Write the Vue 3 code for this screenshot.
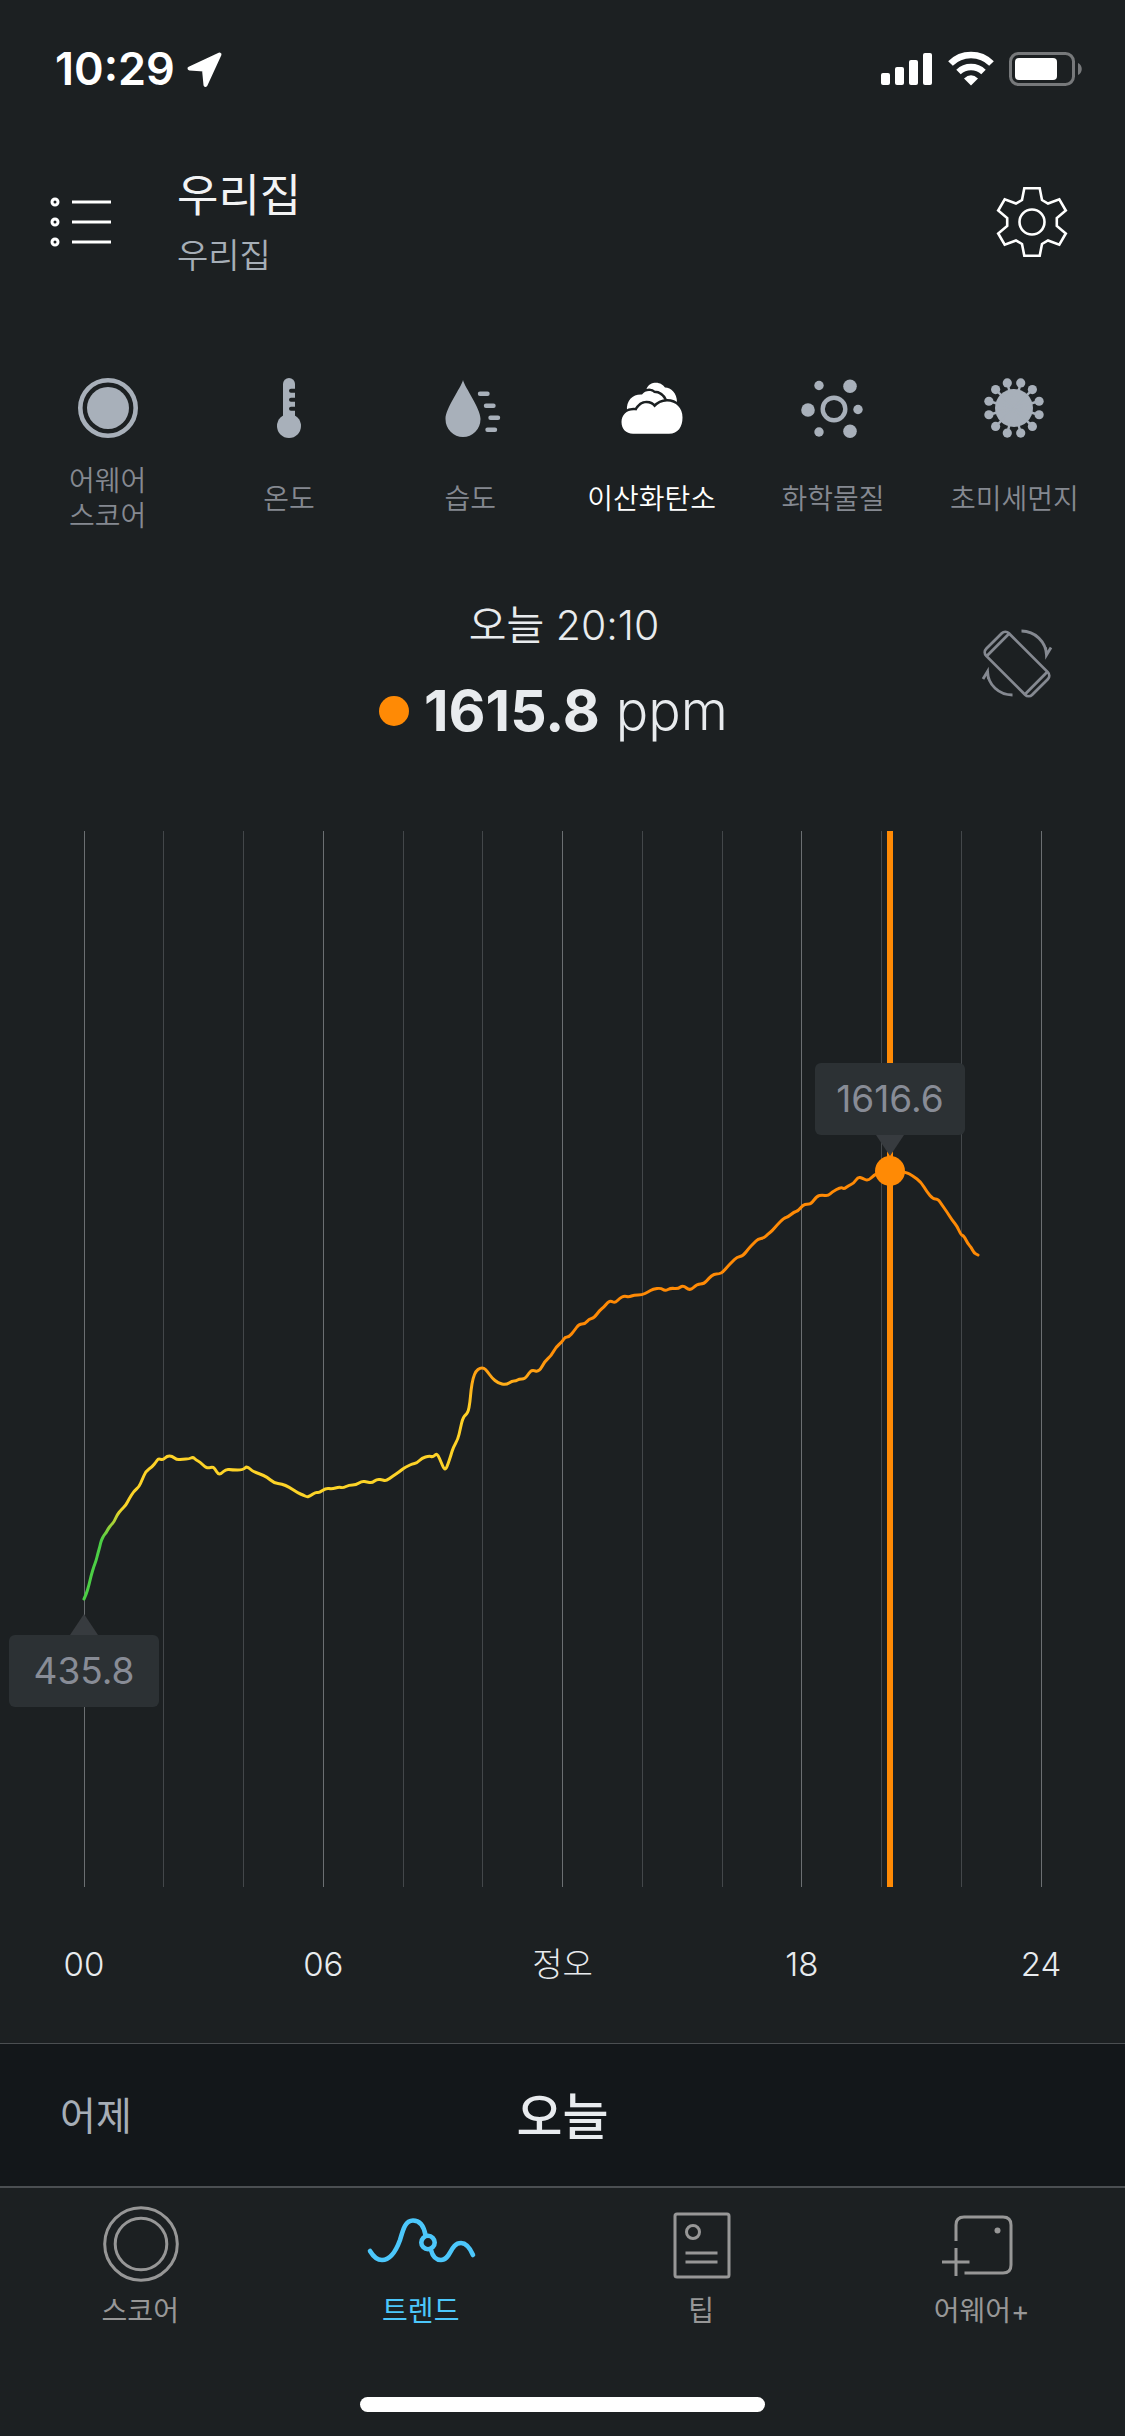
<script setup>
import { computed, ref } from "vue";

const CHART_WIDTH = 957;
const CHART_HEIGHT = 1056;

const metrics = [
  { id: "score", lines: ["어웨어", "스코어"] },
  { id: "temp", lines: ["온도"] },
  { id: "humid", lines: ["습도"] },
  { id: "co2", lines: ["이산화탄소"] },
  { id: "voc", lines: ["화학물질"] },
  { id: "dust", lines: ["초미세먼지"] },
];
const activeMetric = ref("co2");

const tabs = [
  { id: "score", label: "스코어" },
  { id: "trend", label: "트렌드" },
  { id: "tip", label: "팁" },
  { id: "plus", label: "어웨어+" },
];
const activeTab = ref("trend");

const hours = ["00", "06", "정오", "18", "24"];

// One line every two hours, a brighter one every six
const gridLines = Array.from({ length: 13 }, (_, i) => ({
  x: (i * CHART_WIDTH) / 12,
  major: i % 3 === 0,
}));

// CO2 readings in chart units
const readings = [
  [0, 768], [2, 764], [5, 754], [7, 745], [10, 735], [12, 730], [14, 722], [16, 715], [17, 710], [20, 704],
  [22, 702], [24, 698], [27, 694], [30, 691], [33, 684], [37, 679], [42, 674], [45, 668], [50, 660], [55, 656],
  [58, 649], [62, 640], [68, 636], [72, 631], [74, 628], [76, 628], [79, 629], [83, 625], [88, 625], [93, 629],
  [99, 628], [105, 628], [109, 626], [112, 629], [116, 631], [121, 636], [124, 637], [129, 636], [131, 638], [134, 643],
  [137, 643], [142, 638], [148, 639], [159, 639], [163, 635], [168, 640], [176, 643], [183, 646], [190, 652], [198, 653],
  [205, 656], [214, 662], [219, 664], [223, 666], [226, 665], [232, 661], [235, 662], [242, 657], [248, 658], [255, 656],
  [259, 657], [265, 654], [272, 654], [278, 650], [283, 651], [288, 652], [293, 648], [299, 649], [302, 650], [309, 645],
  [315, 641], [320, 637], [324, 635], [328, 633], [333, 632], [338, 627], [345, 625], [349, 626], [352, 623], [354, 624],
  [357, 631], [360, 638], [362, 638], [364, 633], [367, 624], [369, 617], [374, 608], [376, 599], [379, 586], [384, 582],
  [386, 571], [387, 559], [389, 547], [392, 540], [396, 537], [400, 537], [403, 540], [408, 547], [414, 552], [422, 554],
  [428, 550], [432, 550], [435, 548], [441, 548], [445, 542], [448, 539], [455, 541], [461, 530], [467, 525], [472, 516],
  [478, 511], [481, 506], [485, 506], [490, 500], [495, 493], [501, 493], [505, 488], [510, 487], [516, 479], [520, 476],
  [524, 471], [527, 470], [531, 472], [536, 467], [540, 465], [545, 466], [550, 464], [558, 464], [564, 461], [569, 458],
  [577, 457], [581, 460], [587, 457], [594, 458], [599, 454], [606, 460], [613, 453], [620, 453], [625, 447], [630, 443],
  [635, 443], [639, 441], [644, 435], [648, 431], [653, 426], [659, 425], [665, 417], [670, 412], [674, 408], [680, 407],
  [684, 403], [688, 400], [693, 394], [700, 387], [704, 386], [710, 381], [714, 380], [719, 374], [723, 373], [727, 373],
  [733, 365], [738, 364], [744, 365], [748, 361], [757, 356], [760, 358], [764, 355], [770, 352], [774, 346], [778, 347],
  [784, 350], [790, 344], [797, 341], [806, 340], [822, 341], [829, 345], [837, 351], [843, 361], [849, 368], [854, 368],
  [858, 374], [863, 381], [868, 389], [873, 395], [877, 404], [880, 405], [884, 413], [887, 416], [890, 422], [894, 424],
];

// Smooth the readings by running each curve through the midpoints
const linePath = computed(() => {
  let d = `M${readings[0].join(" ")}`;
  for (let i = 1; i < readings.length - 1; i++) {
    const [x, y] = readings[i];
    const [nx, ny] = readings[i + 1];
    d += `Q${x} ${y} ${(x + nx) / 2} ${(y + ny) / 2}`;
  }
  return `${d}L${readings[readings.length - 1].join(" ")}`;
});

const peak = { x: 806, y: 340, value: "1616.6" };
const low = { x: 0, y: 768, value: "435.8" };

const place = (point) => ({
  left: `${(point.x / CHART_WIDTH) * 100}%`,
  top: `${(point.y / CHART_HEIGHT) * 100}%`,
});

const spikes = Array.from({ length: 12 }, (_, i) => {
  const angle = ((i * 30 + 15) * Math.PI) / 180;
  return { x: 30 + 26 * Math.cos(angle), y: 30 + 26 * Math.sin(angle) };
});
</script>

<template>
  <div class="app">
    <!-- STATUS BAR -->
    <div class="status-bar">
      <div class="status-left">
        <span class="clock">10:29</span>
        <svg width="36" height="36" viewBox="0 0 36 36" aria-hidden="true">
          <path
            d="M32.5 2.5 2.5 16.5 17 17.5 18.5 33Z"
            fill="#fff"
            stroke="#fff"
            stroke-width="4"
            stroke-linejoin="round"
          />
        </svg>
      </div>
      <div class="status-right">
        <svg width="52" height="34" viewBox="0 0 52 34" fill="#fff" aria-hidden="true">
          <rect x="0" y="21" width="9" height="12" rx="2" />
          <rect x="14" y="15" width="9" height="18" rx="2" />
          <rect x="28" y="8" width="9" height="25" rx="2" />
          <rect x="42" y="1" width="9" height="32" rx="2" />
        </svg>
        <svg width="46" height="34" viewBox="0 0 46 34" aria-hidden="true">
          <path d="M2.5 11.5A29 29 0 0 1 43.5 11.5" fill="none" stroke="#fff" stroke-width="6.6" />
          <path d="M10.5 20A18 18 0 0 1 35.5 20" fill="none" stroke="#fff" stroke-width="6.4" />
          <path d="M16 26.500Q23 20 30 26.500L23 33.500Z" fill="#fff" />
        </svg>
        <svg width="74" height="34" viewBox="0 0 74 34" aria-hidden="true">
          <rect x="1.500" y="1.500" width="63" height="31" rx="8" fill="none" stroke="#77797b" stroke-width="3" />
          <rect x="6" y="6" width="42" height="22" rx="4" fill="#fff" />
          <path d="M69 11C74 13 74 21 69 23Z" fill="#77797b" />
        </svg>
      </div>
    </div>

    <!-- HEADER -->
    <header class="header">
      <button class="icon-btn" type="button" aria-label="메뉴">
        <svg width="64" height="52" viewBox="0 0 64 52" fill="none" stroke="#fff" stroke-width="3">
          <circle cx="7" cy="6" r="3" />
          <circle cx="7" cy="26" r="3" />
          <circle cx="7" cy="46" r="3" />
          <path d="M24 6H63M24 26H63M24 46H63" />
        </svg>
      </button>
      <div class="place">
        <h1>우리집</h1>
        <p>우리집</p>
      </div>
      <button class="icon-btn" type="button" aria-label="설정">
        <svg width="72" height="72" viewBox="-36 -36 72 72" fill="none" stroke="#fff" stroke-width="2.600">
          <path
            d="M-7.700-33.700H7.700L10-22 16-18.500 27.300-22.700 33.800-11.500 24.800-4V4L33.800 11.500 27.300 22.700 16 18.500 10 22 7.700 33.700H-7.700L-10 22-16 18.500-27.300 22.700-33.800 11.500-24.800 4V-4L-33.800-11.500-27.300-22.700-16-18.500-10-22Z"
          />
          <circle r="12.500" />
        </svg>
      </button>
    </header>

    <!-- METRIC PICKER -->
    <nav class="metrics">
      <button
        v-for="metric in metrics"
        :key="metric.id"
        type="button"
        :class="['metric', { active: metric.id === activeMetric }]"
        @click="activeMetric = metric.id"
      >
        <svg class="metric-icon" viewBox="0 0 60 60" fill="currentColor" aria-hidden="true">
          <template v-if="metric.id === 'score'">
            <circle cx="30" cy="30" r="27.700" fill="none" stroke="currentColor" stroke-width="4.600" />
            <circle cx="30" cy="30" r="21" />
          </template>
          <template v-else-if="metric.id === 'temp'">
            <rect x="24" y="0" width="12" height="44" rx="6" />
            <circle cx="30" cy="48" r="12" />
            <path class="cut" d="M32 12.700H38M32 21.700H38M32 30.700H38" />
          </template>
          <template v-else-if="metric.id === 'humid'">
            <path d="M23 2C25 10 40.500 30 40.500 41A17.500 18 0 0 1 5.500 41C5.500 30 21 10 23 2Z" />
            <path
              d="M40 15.700H47.500M46 27.700H53.500M50.500 39.700H58M47.500 51.700H55"
              stroke="currentColor"
              stroke-width="4.400"
              stroke-linecap="round"
            />
          </template>
          <template v-else-if="metric.id === 'co2'">
            <path d="M24.500 11C26 6.500 30 4.700 34 4.700C38 4.700 41.500 7 43 9.500C49 9.500 55 15 55 24L50 28 38 24Z" />
            <path
              class="cloud"
              d="M5 33C4 22 11 16 20 16.500C23 12.500 29 12 32 15C37 15 41 18 43 23L33 36 10 38Z"
            />
            <path
              class="cloud"
              d="M11 55.700H47C56 55.700 60.500 49 60.500 39.500C60.500 30 54 23.500 45 23.500C40 23.500 36 25.500 32.500 29.500C30.500 26.500 27.500 25.300 24.500 25.300C20 25.300 17 28 14.500 32.500C6 31-.5 36-.5 44C-.5 51 4 55.700 11 55.700Z"
            />
          </template>
          <template v-else-if="metric.id === 'voc'">
            <circle cx="31" cy="31" r="11.300" fill="none" stroke="currentColor" stroke-width="4.400" />
            <circle cx="16" cy="7.500" r="4.700" />
            <circle cx="47" cy="8.300" r="6.800" />
            <circle cx="5" cy="32" r="6.800" />
            <circle cx="55" cy="31.500" r="4.700" />
            <circle cx="16" cy="54" r="4.700" />
            <circle cx="47" cy="53.300" r="6.800" />
          </template>
          <template v-else>
            <circle cx="30" cy="30" r="19" />
            <g v-for="(spike, i) in spikes" :key="i">
              <line x1="30" y1="30" :x2="spike.x" :y2="spike.y" stroke="currentColor" stroke-width="2.400" />
              <circle :cx="spike.x" :cy="spike.y" r="4.600" />
            </g>
          </template>
        </svg>
        <span class="metric-label">
          <span v-for="line in metric.lines" :key="line">{{ line }}</span>
        </span>
      </button>
    </nav>

    <!-- CURRENT READING -->
    <section class="reading">
      <div class="reading-body">
        <p class="reading-time">오늘 20:10</p>
        <p class="reading-value">
          <span class="dot"></span>
          <strong>1615.8</strong>
          <span class="unit">ppm</span>
        </p>
      </div>
      <button class="icon-btn rotate-btn" type="button" aria-label="가로 보기">
        <svg width="72" height="72" viewBox="0 0 72 72" fill="none" stroke="#858991" stroke-width="2.800">
          <g transform="rotate(-45 36 36)">
            <rect x="20" y="3.500" width="32" height="65" rx="5" />
            <path d="M20 9H52M20 63H52" />
          </g>
          <path d="M40.500 3C54 3 65 14 65.500 27L70 19.500M65.500 27 64.500 19.500" />
          <path d="M31.500 67C18 67 7 57 6.500 43.500L2 51M6.500 43.500 7.500 51" />
        </svg>
      </button>
    </section>

    <!-- CHART -->
    <section class="chart">
      <div class="plot">
        <svg
          class="plot-svg"
          :viewBox="`0 0 ${CHART_WIDTH} ${CHART_HEIGHT}`"
          preserveAspectRatio="none"
          aria-hidden="true"
        >
          <defs>
            <linearGradient id="level" gradientUnits="userSpaceOnUse" x1="0" y1="500" x2="0" y2="720">
              <stop offset="0" stop-color="#ff8a05" />
              <stop offset="0.100" stop-color="#ff8f08" />
              <stop offset="0.220" stop-color="#ffa817" />
              <stop offset="0.360" stop-color="#ffd026" />
              <stop offset="0.800" stop-color="#fbd428" />
              <stop offset="0.950" stop-color="#4ccf45" />
            </linearGradient>
          </defs>
          <line
            v-for="line in gridLines"
            :key="line.x"
            :class="['grid-line', { major: line.major }]"
            :x1="line.x"
            :x2="line.x"
            y1="0"
            :y2="CHART_HEIGHT"
          />
          <line class="cursor" :x1="peak.x" :x2="peak.x" y1="0" :y2="CHART_HEIGHT" />
          <path class="curve" :d="linePath" stroke="url(#level)" />
        </svg>
        <div class="marker" :style="place(peak)"></div>
        <div class="tip above" :style="place(peak)">{{ peak.value }}</div>
        <div class="tip below" :style="place(low)">{{ low.value }}</div>
      </div>
    </section>
    <div class="hours">
      <span v-for="hour in hours" :key="hour">{{ hour }}</span>
    </div>

    <!-- DAY SWITCH -->
    <div class="days">
      <button class="day prev" type="button">어제</button>
      <button class="day today" type="button">오늘</button>
    </div>

    <!-- TAB BAR -->
    <nav class="tab-bar">
      <a
        v-for="tab in tabs"
        :key="tab.id"
        :href="`#${tab.id}`"
        :class="['tab', { active: tab.id === activeTab }]"
        @click.prevent="activeTab = tab.id"
      >
        <svg
          width="107"
          height="76"
          viewBox="0 0 107 76"
          fill="none"
          stroke="currentColor"
          stroke-width="3"
          aria-hidden="true"
        >
          <template v-if="tab.id === 'score'">
            <circle cx="54" cy="38" r="36.300" />
            <circle cx="54" cy="38" r="25.800" />
          </template>
          <g v-else-if="tab.id === 'trend'" stroke-width="4.600" stroke-linecap="round">
            <path
              d="M3 45C6 50 10 54 15 54C24 54 29 45 33 34C36 24 38 14.500 46 14.500C53 14.500 57 21 58.500 29M64 44C65.500 50 69 54 74 54C84 54 83 37 94 37C99 37 103 42 106 49"
            />
            <circle cx="61" cy="36.500" r="6.700" />
          </g>
          <template v-else-if="tab.id === 'tip'">
            <rect x="27" y="8" width="54" height="63" rx="2" />
            <circle cx="45" cy="26" r="6.500" />
            <path d="M37.500 47H69.500M37.500 56H69.500" />
          </template>
          <template v-else>
            <path d="M28 35V19Q28 11 36 11H75Q83 11 83 19V59Q83 67 75 67H36.500" />
            <path d="M28 42V70M14 56H41.500" />
            <circle cx="69.500" cy="24.500" r="3" fill="currentColor" stroke="none" />
          </template>
        </svg>
        <span>{{ tab.label }}</span>
      </a>
    </nav>
    <div class="home-indicator"></div>
  </div>
</template>

<style>
body {
  margin: 0;
  background: #1c2022;
}
</style>

<style scoped>
/* ===== BASE ===== */
.app {
  display: flex;
  flex-direction: column;
  min-height: 100vh;
  background: #1c2022;
  color: #e8ebee;
  font-family: Inter, "Noto Sans CJK KR", sans-serif;
}

h1,
p {
  margin: 0;
}

button {
  padding: 0;
  border: none;
  background: none;
  color: inherit;
  font: inherit;
  cursor: pointer;
}

svg {
  display: block;
  flex: none;
  overflow: visible;
}

/* ===== STATUS BAR ===== */
.status-bar {
  display: flex;
  justify-content: space-between;
  box-sizing: border-box;
  height: 132px;
  padding: 52px 42px 0 55px;
}

.status-left {
  display: flex;
  gap: 12px;
}

.clock {
  color: #fff;
  font-size: 45px;
  font-weight: 600;
  line-height: 34px;
}

.status-right {
  display: flex;
  gap: 15px;
}

/* ===== HEADER ===== */
.header {
  display: flex;
  align-items: center;
  height: 180px;
  padding: 0 57px 0 48px;
}

.place {
  flex: 1;
  padding: 8px 0 0 65px;
}

.place h1 {
  color: #f2f3f4;
  font-size: 45px;
  font-weight: 400;
  line-height: 60px;
}

.place p {
  color: #a6aeb7;
  font-size: 34px;
  font-weight: 350;
  line-height: 60px;
}

/* ===== METRICS ===== */
.metrics {
  display: grid;
  grid-template-columns: repeat(6, 1fr);
  padding: 66px 20px 0 17px;
}

.metric {
  display: flex;
  flex-direction: column;
  align-items: center;
  gap: 25px;
  color: #858991;
}

.metric-icon {
  width: 60px;
  height: 60px;
  color: #a8b0ba;
}

.metric-label {
  display: flex;
  flex-direction: column;
  justify-content: center;
  height: 72px;
  font-size: 28px;
  font-weight: 350;
  line-height: 35px;
  white-space: nowrap;
}

.metric.active,
.metric.active .metric-icon {
  color: #fff;
}

.cut {
  stroke: #1c2022;
  stroke-width: 4;
  stroke-linecap: round;
}

.cloud {
  stroke: #1c2022;
  stroke-width: 5;
  paint-order: stroke;
}

/* ===== READING ===== */
.reading {
  display: grid;
  grid-template-columns: 1fr auto 1fr;
  height: 152px;
  padding: 60px 72px 84px;
}

.reading-body {
  display: flex;
  flex-direction: column;
  grid-column: 2;
  align-items: center;
  gap: 20px;
}

.reading-time {
  padding-left: 3px;
  font-size: 41px;
  font-weight: 350;
  line-height: 60px;
}

.reading-value {
  display: flex;
  align-items: center;
  padding-right: 18px;
  font-size: 54px;
  line-height: 72px;
}

.reading-value strong {
  margin: 0 16px 0 15px;
  font-size: 57px;
  font-weight: 700;
}

.unit {
  font-weight: 300;
}

.dot {
  width: 30px;
  height: 30px;
  border-radius: 50%;
  background: #ff8a05;
}

.rotate-btn {
  align-self: start;
  justify-self: end;
  margin-top: 33px;
}

/* ===== CHART ===== */
.chart {
  padding: 0 84px;
}

.plot {
  position: relative;
  height: 1056px;
}

.plot-svg {
  width: 100%;
  height: 100%;
}

.grid-line {
  stroke: #43474a;
  stroke-width: 1;
  shape-rendering: crispEdges;
  vector-effect: non-scaling-stroke;
}

.grid-line.major {
  stroke: #6b6f72;
}

.cursor {
  stroke: #ff8a05;
  stroke-width: 6;
  vector-effect: non-scaling-stroke;
}

.curve {
  fill: none;
  stroke-width: 3;
  stroke-linecap: round;
  stroke-linejoin: round;
  vector-effect: non-scaling-stroke;
}

.marker {
  position: absolute;
  width: 30px;
  height: 30px;
  border-radius: 50%;
  background: #ff8a05;
  transform: translate(-50%, -50%);
}

.tip {
  position: absolute;
  width: 150px;
  height: 72px;
  border-radius: 6px;
  background: #2c3134;
  color: #888c96;
  font-size: 37px;
  line-height: 72px;
  text-align: center;
  transform: translateX(-50%);
}

.tip::after {
  content: "";
  position: absolute;
  left: 50%;
  border: 14px solid transparent;
  transform: translateX(-50%);
}

.tip.above {
  margin-top: -108px;
}

.tip.above::after {
  top: 100%;
  border-top: 21px solid #373b3f;
  border-bottom: 0;
}

.tip.below {
  margin-top: 36px;
}

.tip.below::after {
  bottom: 100%;
  border-top: 0;
  border-bottom: 21px solid #373b3f;
}

.hours {
  display: flex;
  justify-content: space-between;
  padding: 47px 44px 49px;
  font-size: 33px;
  font-weight: 300;
  line-height: 60px;
}

.hours span {
  width: 80px;
  text-align: center;
}

/* ===== DAY SWITCH ===== */
.days {
  display: grid;
  grid-template-columns: 1fr auto 1fr;
  align-items: center;
  height: 138px;
  padding: 0 60px 4px;
  border-top: 1px solid #4b4f52;
  border-bottom: 2px solid #4b4f52;
  background: #13171a;
}

.day {
  justify-self: start;
}

.prev {
  color: #a6aeb7;
  font-size: 39px;
}

.today {
  font-size: 50px;
  font-weight: 500;
}

/* ===== TAB BAR ===== */
.tab-bar {
  display: grid;
  grid-template-columns: repeat(4, 1fr);
  padding: 18px 3px 0 0;
}

.tab {
  display: flex;
  flex-direction: column;
  align-items: center;
  gap: 10px;
  color: #979797;
  font-size: 28px;
  line-height: 38px;
  text-decoration: none;
}

.tab.active {
  color: #4cc7fb;
}

.home-indicator {
  align-self: center;
  width: 36%;
  height: 15px;
  margin: auto 0 24px;
  border-radius: 8px;
  background: #fff;
}
</style>
